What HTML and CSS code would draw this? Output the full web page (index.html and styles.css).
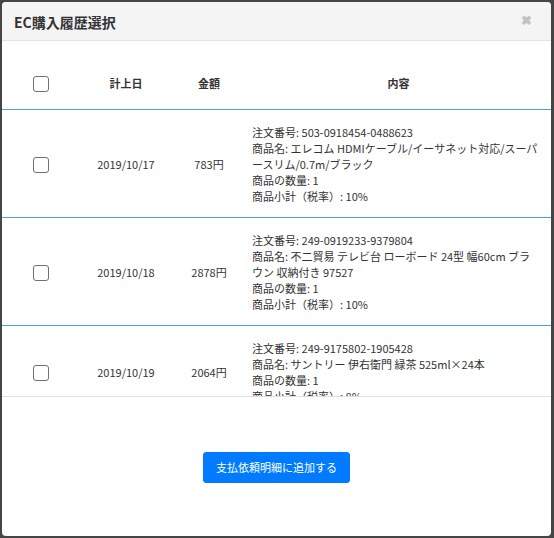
FILE: index.html
```html
<!DOCTYPE html>
<html lang="ja">
<head>
<meta charset="utf-8">
<link rel="stylesheet" href="styles.css">
</head>
<body>
<div class="modal">
  <div class="modal-header">
    <h1 class="title">EC購入履歴選択</h1>
    <span class="close">&#x2716;</span>
  </div>
  <div class="modal-body">
    <table class="history">
      <colgroup>
        <col class="c-check"><col class="c-date"><col class="c-amount"><col class="c-content">
      </colgroup>
      <thead>
        <tr>
          <th><input type="checkbox" class="cb"></th>
          <th>計上日</th>
          <th>金額</th>
          <th>内容</th>
        </tr>
      </thead>
      <tbody>
        <tr>
          <td class="center"><input type="checkbox" class="cb"></td>
          <td class="center">2019/10/17</td>
          <td class="center">783円</td>
          <td class="content">
            <div>注文番号: 503-0918454-0488623</div>
            <div>商品名: エレコム HDMIケーブル/イーサネット対応/スーパースリム/0.7m/ブラック</div>
            <div>商品の数量: 1</div>
            <div>商品小計（税率）: 10%</div>
          </td>
        </tr>
        <tr>
          <td class="center"><input type="checkbox" class="cb"></td>
          <td class="center">2019/10/18</td>
          <td class="center">2878円</td>
          <td class="content">
            <div>注文番号: 249-0919233-9379804</div>
            <div>商品名: 不二貿易 テレビ台 ローボード 24型 幅60cm ブラウン 収納付き 97527</div>
            <div>商品の数量: 1</div>
            <div>商品小計（税率）: 10%</div>
          </td>
        </tr>
        <tr>
          <td class="center"><input type="checkbox" class="cb"></td>
          <td class="center">2019/10/19</td>
          <td class="center">2064円</td>
          <td class="content">
            <div>注文番号: 249-9175802-1905428</div>
            <div>商品名: サントリー 伊右衛門 緑茶 525ml×24本</div>
            <div>商品の数量: 1</div>
            <div>商品小計（税率）: 8%</div>
          </td>
        </tr>
      </tbody>
    </table>
  </div>
  <div class="modal-footer">
    <button class="btn-primary">支払依頼明細に追加する</button>
  </div>
</div>
</body>
</html>
```

FILE: styles.css
```css
html, body {
  margin: 0;
  padding: 0;
  background: #454545;
  height: 538px;
  overflow: hidden;
}
body {
  font-family: "Noto Sans CJK JP", "Noto Sans", sans-serif;
  color: #333;
  padding: 2px 3px 2px 2px;
  box-sizing: border-box;
}
.modal {
  width: 549px;
  height: 534px;
  background: #fff;
  border-radius: 4px;
  overflow: hidden;
  display: flex;
  flex-direction: column;
}
.modal-header {
  height: 38px;
  flex: none;
  background: #f4f4f4;
  border-bottom: 1px solid #e3e3e3;
  display: flex;
  align-items: center;
  justify-content: space-between;
  padding: 0 19px 0 12px;
}
.title {
  margin: 0;
  font-size: 14px;
  font-weight: 700;
  color: #333;
  line-height: 1;
  padding-top: 2px;
}
.close {
  font-size: 13px;
  color: #c2c2c2;
  font-weight: 700;
  line-height: 1;
  margin-top: -4px;
}
.modal-body {
  height: 356px;
  flex: none;
  overflow: hidden;
  border-bottom: 1px solid #e0e0e0;
  padding-top: 16px;
  box-sizing: border-box;
}
.history {
  width: 100%;
  border-collapse: collapse;
  table-layout: fixed;
  font-size: 11px;
  line-height: 16px;
}
.c-check { width: 78px; }
.c-date { width: 92px; }
.c-amount { width: 74px; }
.history th {
  height: 52px;
  padding: 0;
  font-weight: 700;
  text-align: center;
  vertical-align: middle;
  border-bottom: 1px solid #4aa3da;
}
.history td {
  padding: 14px 0 13px;
  vertical-align: middle;
  border-bottom: 1px solid #4aa3da;
}
.history td.center {
  text-align: center;
}
.history td.content {
  padding: 14px 12px 13px 6px;
  text-align: left;
}
.cb {
  appearance: none;
  -webkit-appearance: none;
  width: 16px;
  height: 16px;
  margin: 0;
  border: 1px solid #707070;
  border-radius: 3px;
  background: #fff;
  vertical-align: middle;
  box-sizing: border-box;
  display: inline-block;
}
.modal-footer {
  flex: 1;
  display: flex;
  align-items: center;
  justify-content: center;
}
.btn-primary {
  height: 31px;
  padding: 0 12px;
  background: #007bff;
  color: #fff;
  border: 1px solid #007bff;
  border-radius: 3px;
  font-family: "Noto Sans CJK JP", "Noto Sans", sans-serif;
  font-size: 11px;
  line-height: 1;
  margin-top: 1px;
}
```
